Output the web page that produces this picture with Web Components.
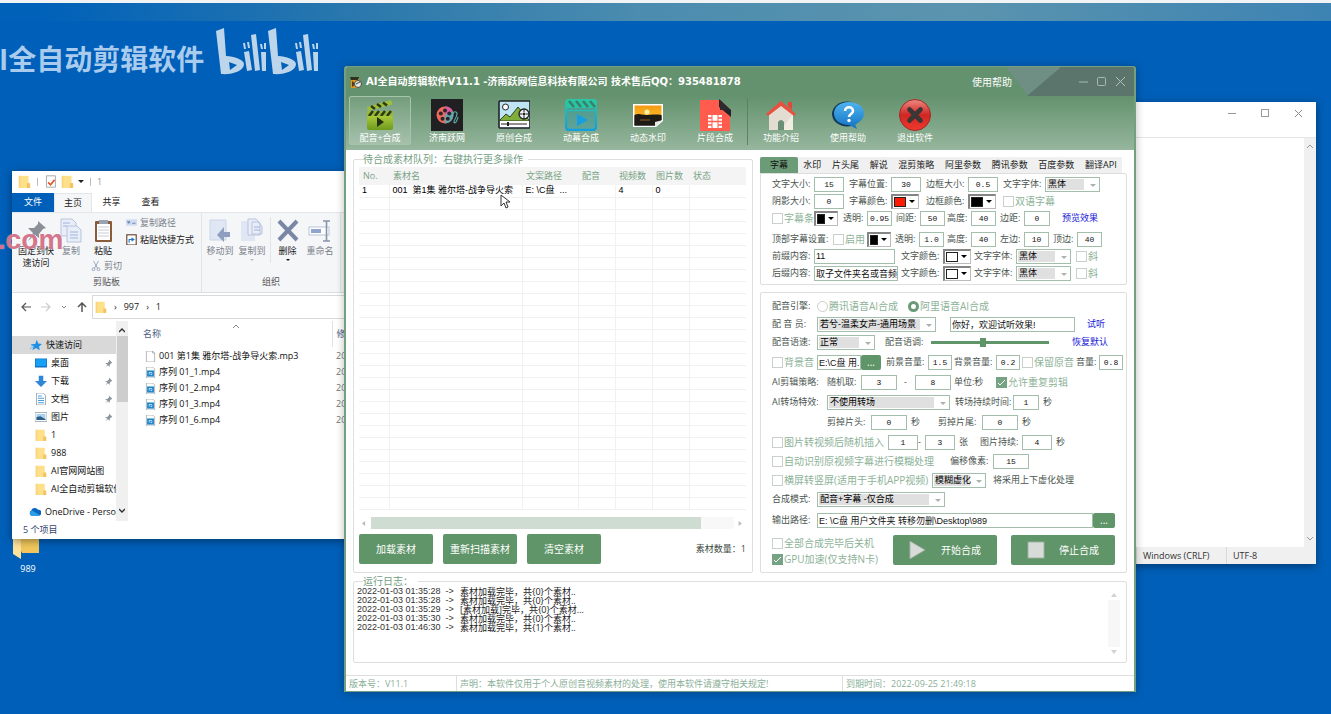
<!DOCTYPE html>
<html lang="zh-CN">
<head>
<meta charset="utf-8">
<title>AI全自动剪辑软件</title>
<style>
html,body{margin:0;height:100%;overflow:hidden;background:#005fb8}
body{font:9px/12px "Open Sans","Noto Sans CJK SC",sans-serif;color:#222}
</style>
</head>
<body>
<desktop-screen></desktop-screen>
<script>
const BASE = `*{box-sizing:border-box}:host([hidden]){display:none}
button,input,select{font:inherit;color:inherit;margin:0;padding:0;border:0;background:none;border-radius:0;outline:0;min-width:0}
svg{display:block}`;
const define = (name, css, html) => customElements.define(name, class extends HTMLElement {
  connectedCallback() {
    if (this.shadowRoot) return;
    const root = this.attachShadow({ mode: 'open' });
    const get = (key, fallback = '') => this.getAttribute(key) ?? fallback;
    root.innerHTML = `<style>${BASE}${css}</style>${typeof html === 'function' ? html(get) : html}`;
  }
});
const svg = (size, body, box = 32) => `<svg width="${size}" height="${size}" viewBox="0 0 ${box} ${box}" aria-hidden="true">${body}</svg>`;

/* ---------- icons ---------- */
const ICONS = {
  clapper: `<defs><linearGradient id="g" x2="0" y2="1"><stop stop-color="#a8c93a"/><stop offset="1" stop-color="#6f9a1c"/></linearGradient></defs>
    <path d="M3 8 27 1l1.500 4.500L4 12z" fill="#9dbf3a"/><path d="M7 7l4 3M13 5l4 3M19 3.500l4 3" stroke="#2d3a12" stroke-width="2.600"/>
    <path d="M3 12h26v6H3z" fill="#94b83a"/><path d="M9 12l-4 5M15 12l-4 5M21 12l-4 5M27 12l-4 5" stroke="#2d3a12" stroke-width="2.600"/>
    <rect x="3" y="17" width="26" height="14" rx="2" fill="url(#g)"/><path d="M13 18v10l7-5z" fill="#26300f"/>`,
  reel: `<rect width="32" height="32" fill="#201f22"/><circle cx="14" cy="16" r="8.500" fill="#ee6a5d"/><path d="M14 7.500a8.500 8.500 0 0 1 0 17z" fill="#5fa9b2"/><path d="M14 7.500a8.500 8.500 0 0 1 8 5l-8 3z" fill="#d95c9b"/>
    <g fill="#2a2629"><circle cx="14" cy="11.500" r="2"/><circle cx="9.800" cy="14.500" r="2"/><circle cx="11.500" cy="19.700" r="2"/><circle cx="16.800" cy="19.700" r="2"/><circle cx="18.300" cy="14.500" r="2"/></g>
    <path d="M22 15c0-3 4-3 4 0 0 4-4 6-3 9M23 24c3 0 3-3 4-6" fill="none" stroke="#57a99c" stroke-width="1.200"/>`,
  landscape: `<rect x="1" y="2" width="31" height="27" rx="1" fill="#bfe4f4" stroke="#20242a" stroke-width="1.600"/><path d="M2 21 8 15l4 3 8-10 11 13v1H2z" fill="#7fae3c" stroke="#31451e"/><path d="M2 22h29v6H2z" fill="#fff"/><path d="M3 25h26" stroke="#222" stroke-width="1.200"/><path d="M10 23v4" stroke="#222" stroke-width="2"/>
    <circle cx="7.500" cy="8" r="3" fill="#fff" stroke="#222"/><circle cx="26" cy="15" r="5" fill="#eef3f6" stroke="#222" stroke-width="1.300"/><circle cx="26" cy="15" r="1.500" fill="#222"/><path d="M26 10v3M26 17v3M21 15h3M28 15h3" stroke="#222"/>`,
  teal: `<defs><linearGradient id="t" x2="0" y2="1"><stop stop-color="#2bc7a4"/><stop offset="1" stop-color="#109fe0"/></linearGradient></defs>
    <rect x="1" y="1" width="30" height="30" rx="3" fill="#1d9fb4" fill-opacity=".35" stroke="url(#t)" stroke-width="2.400"/><path d="M1 2h30v7H1z" fill="#27c5a4"/><path d="M4 2l5 6M11 2l5 6M18 2l5 6M25 2l5 6" stroke="#3a7f68" stroke-width="2.500"/><path d="M1 11.500h30" stroke="#25bbb6" stroke-width="1.500"/><path d="M12 15v12l11-6z" fill="#169fe0"/>`,
  sunset: `<defs><linearGradient id="s" x2="0" y2="1"><stop stop-color="#f39a12"/><stop offset=".45" stop-color="#f9b224"/><stop offset=".55" stop-color="#5a3a12"/><stop offset="1" stop-color="#111"/></linearGradient></defs>
    <path d="M1 5h30v17l-7 6H1z" fill="#fff"/><path d="M2.500 6.500h27V21l-6 5.500h-21z" fill="url(#s)"/><circle cx="15" cy="13" r="2.500" fill="#fff2a8"/><path d="M2.500 16c5-2 7 0 11 0s10-1 16 0v5l-6 5.500h-21z" fill="#1e1a15"/><path d="M8 21h10" stroke="#8a6224"/><path d="M31 21l-8 7v-5z" fill="#e8e8e8"/>`,
  film: `<path d="M1 1h20l10 9v22H1z" fill="#ff5c4d"/><path d="M20 0 32 11v7L20 8z" fill="#23232a"/><path d="M21 1v10h10z" fill="#2d2a30"/><rect x="9" y="16" width="14" height="13" fill="#fff"/><path d="M13 16v13M19 16v13" stroke="#ff5c4d"/><path d="M13 22.500h6M9 19h4M9 22.500h4M9 26h4M19 19h4M19 22.500h4M19 26h4" stroke="#ff5c4d" stroke-width="1.300"/>`,
  home: `<path d="M4 15 16 5l12 10v16H4z" fill="#e2ddd0"/><path d="M16 31 28 15v16z" fill="#f0ecdf"/><path d="M23 3h4v8l-4-4z" fill="#e2473a"/><path d="M1 15 16 2l15 13-2 2L16 7 3 17z" fill="#e8503f"/><path d="M13 31v-8q3-4 6 0v8z" fill="#6b8f76"/>`,
  help: `<defs><linearGradient id="h" x2="0" y2="1"><stop stop-color="#4fb4ef"/><stop offset="1" stop-color="#1272c4"/></linearGradient></defs><ellipse cx="15" cy="15" rx="15" ry="12.500" fill="#123a58"/><path d="M17 3c9 0 15 5 15 11.500 0 5-4 9-9 10.500l2 5-8-4C8 26 2 21 2 14.500S8 3 17 3z" fill="url(#h)"/><path d="M13 12c0-5 8-5 8 0 0 3-4 3-4 6" fill="none" stroke="#fff" stroke-width="2.600"/><circle cx="17" cy="21.500" r="1.700" fill="#fff"/>`,
  exit: `<defs><linearGradient id="e" x2="0" y2="1"><stop stop-color="#ef8a84"/><stop offset=".5" stop-color="#d02722"/><stop offset="1" stop-color="#ef3a30"/></linearGradient></defs><circle cx="16" cy="16" r="15.500" fill="url(#e)" stroke="#a02a26"/><path d="M10.500 10.500l11 11M21.500 10.500l-11 11" stroke="#3c3535" stroke-width="4.600" stroke-linecap="round"/>`
};
const FOLDER = `<path d="M1 1h12v15H1z" fill="#ffe08a"/><path d="M1 1h2v15H1z" fill="#fbd37a"/><path d="M11 10h4v6h-4z" fill="#f3c45e"/>`;
const SMALL = {
  folder: FOLDER,
  star: `<path d="M9 1l2 5 5 .500-4 3.500 1 5-5-3-5 3 2-5-4-3 6-.500z" fill="#1c8fe6"/><path d="M0 13l5-3M1 9h4" stroke="#5db2f0"/>`,
  desktop: `<rect y="2" width="16" height="12" fill="#0f74c9"/><rect x="1" y="3" width="14" height="9" fill="#17a0f5"/>`,
  download: `<path d="M5 1h6v7h5l-8 8-8-8h5z" fill="#2f86d6"/>`,
  doc: `<path d="M2 0h9l3 3v13H2z" fill="#fff" stroke="#8595a5"/><path d="M4 4h5M4 7h8M4 10h8M4 13h8" stroke="#4d9bd9" stroke-width="1.400"/>`,
  picture: `<rect y="2" width="16" height="12" fill="#fff" stroke="#8a9aa8"/><rect x="2" y="4" width="12" height="8" fill="#a9d0ec"/><path d="M2 12V8l5-1 7 4v1z" fill="#2c5d86"/>`,
  cloud: `<path d="M3 13a4 4 0 0 1 0-7 5 5 0 0 1 9-1 4 4 0 0 1 1 8z" fill="#0a67c1"/><path d="M3 13a4 4 0 0 1 1-7l10 6-1 1z" fill="#28a0ea"/>`,
  blank: `<path d="M2 0h9l3 3v13H2z" fill="#fff" stroke="#999"/><path d="M11 0v3h3" fill="none" stroke="#999"/>`,
  video: `<path d="M2 0h9l3 3v13H2z" fill="#fff" stroke="#999"/><rect x="3" y="5" width="10" height="9" fill="#1d86cf"/><path d="M6 11V8h4M8 11h2V9" fill="none" stroke="#fff"/>`,
  pin: `<path d="M9 1l6 6-3 1-2 3 0 3-3-3-5 4 4-5-4-3 4 0 3-3z" fill="#8d949c"/>`
};

/* ---------- form controls ---------- */
const FIELD = `:host{display:flex;min-width:0;white-space:nowrap}label{display:flex;align-items:center;flex:1;min-width:0}
label>span{flex:none}`;
define('text-field', FIELD + `
input{flex:none;height:15px;border:1px solid #a3bfab;background:#fff;color:#111;text-align:center;font:8px/13px "Liberation Mono","Noto Sans CJK SC",monospace}
:host([wide]) input{text-align:left;padding-left:1px;font:9px/13px "Liberation Sans","Noto Sans CJK SC",sans-serif}
:host([fill]) input{flex:1;width:auto}i{font-style:normal;padding-left:4px}`,
  g => `<label><span style="width:${g('lw', 0)}px">${g('label')}</span><input style="width:${g('w', 30)}px" value="${g('value')}" aria-label="${g('label') || g('name')}">${g('unit') && `<i>${g('unit')}</i>`}</label>`);
define('select-field', FIELD + `
select{appearance:none;height:15px;border:1px solid #a3bfab;padding-left:2px;color:#000;font:9px/13px "Liberation Sans","Noto Sans CJK SC",sans-serif;
background:linear-gradient(#e0e0e0,#e0e0e0) 1px 1px/calc(100% - 16px) calc(100% - 2px) no-repeat,#fff}
label{position:relative}label:after{content:"";position:absolute;right:4px;top:7px;border:3px solid transparent;border-top:3px solid #aab4ad;border-bottom:0}label{flex:none}`,
  g => `<label><span style="width:${g('lw', 0)}px">${g('label')}</span><select style="width:${g('w', 55)}px" aria-label="${g('label') || g('name')}"><option>${g('value')}</option></select></label>`);
define('color-field', FIELD + `
button{display:flex;align-items:center;justify-content:space-between;height:15px;padding:1px;border:1px solid #bbb;border-width:2px 1px 1px 2px;border-top-color:#858585;border-left-color:#858585;background:#fff}
b{flex:1;height:10px;border:1px solid #222}u{margin:0 2px 0 3px;border:3px solid transparent;border-top:3px solid #000;border-bottom:0}`,
  g => `<label><span style="width:${g('lw', 0)}px">${g('label')}</span><button type="button" aria-label="${g('label') || '颜色'}" style="width:${g('w', 28)}px"><b style="background:${g('color')}"></b><u></u></button></label>`);
define('check-field', FIELD + `:host{color:#8db298;font-size:10px}
input{appearance:none;flex:none;width:11px;height:11px;margin-right:1px;border:1px solid #c9cfcb;background:#fff}
input:checked{border-color:#76a384;background:#76a384 linear-gradient(#76a384,#76a384)}
label{position:relative}svg{position:absolute;left:1px;display:none}input:checked+svg{display:block}
input[type=radio]{border-radius:50%}input[type=radio]:checked{background:#fff;border:3px solid #6b9a79}input[type=radio]:checked+svg{display:none}`,
  g => `<label><input type="${g('type', 'checkbox')}" ${g('on') && 'checked'}>${svg(9, '<path d="M1 5l2 2 5-5" fill="none" stroke="#fff"/>', 9)}${g('label')}</label>`);
define('slider-field', FIELD + `input{appearance:none;width:118px;height:12px;background:linear-gradient(#5f9568,#5f9568) center/100% 3px no-repeat}
input::-webkit-slider-thumb{appearance:none;width:6px;height:9px;background:#5f9568}`,
  g => `<label><span style="width:${g('lw')}px">${g('label')}</span><input type="range" min="0" max="100" value="44"></label>`);
define('text-link', `:host{display:block;white-space:nowrap}a{color:#1414d8;text-decoration:none}`, `<a href="#"><slot></slot></a>`);
define('push-button', `:host{display:block}button{display:flex;align-items:center;justify-content:center;width:100%;height:100%;border-radius:2px;background:#5f9568;color:#fff;font-size:10px;cursor:pointer;white-space:nowrap}
:host([small]) button{align-items:center;line-height:8px}
::slotted(svg){margin-right:14px}`, `<button type="button"><slot></slot></button>`);
define('form-row', `:host{display:block}div{display:grid;justify-content:start;align-items:center;height:16px;white-space:nowrap}`,
  g => `<div style="padding-left:${g('indent', 0)}px;${g('fill') ? 'display:flex' : `grid-template-columns:${g('cols').split(' ').map(c => c === 'auto' || !c ? 'auto' : c + 'px').join(' ')}`}"><slot></slot></div>`);
define('form-stack', `:host{display:flex;flex-direction:column}`, g => `<style>:host{gap:${g('gap', 0)}px}</style><slot></slot>`);
define('group-box', `:host{display:block;min-width:0}fieldset{display:flex;flex-direction:column;height:100%;min-width:0;margin:0;padding:2px 6px 7px 5px;border:1px solid #dcdfdd;border-radius:2px}
legend{margin-left:4px;padding:0 5px 0 0;font-size:10px;line-height:12px;color:#76a083}`,
  g => `<fieldset><legend>${g('label')}</legend><slot></slot></fieldset>`);

/* ---------- main window parts ---------- */
define('app-title', `:host{display:flex;position:relative;height:29px;align-items:center;padding-left:4px;color:#fff}
h1{flex:1;margin:0 0 0 4px;font:bold 10px/14px "DejaVu Sans","Noto Sans CJK SC",sans-serif;white-space:nowrap}
.help{font-size:10px;margin-right:15px}.ctl{display:flex;width:107px;height:29px;justify-content:flex-end;align-items:center;gap:8px;padding-right:8px;background:#5b756d;clip-path:polygon(0 100%,34px 0,100% 0,100% 100%)}
.fold{position:absolute;top:0;right:72px;width:56px;height:29px;background:#6f8f84;clip-path:polygon(0 0,100% 0,22px 100%)}
.help,.ctl{position:relative}`,
  `${svg(12, '<path d="M1 3h8v9H1z" fill="#e8961b"/><path d="M0 1h9l-1 3H1z" fill="#33301f"/><path d="M2 5l4 3-4 3z" fill="#5a3a10"/><circle cx="8" cy="8" r="3.500" fill="#e6e6e0" stroke="#454a45"/><path d="M6 8l4-2" stroke="#444"/>', 12)}
  <h1>AI全自动剪辑软件V11.1 -济南跃网信息科技有限公司 技术售后QQ：935481878</h1><div class="fold"></div><button class="help">使用帮助</button>
  <div class="ctl"><button aria-label="最小化">${svg(10, '<path d="M0 5h9" stroke="#a9b8b1"/>', 10)}</button><button aria-label="最大化">${svg(10, '<rect x=".5" y=".5" width="8" height="8" rx="1" fill="none" stroke="#a9b8b1"/>', 10)}</button><button aria-label="关闭">${svg(11, '<path d="M1 1l9 9M10 1l-9 9" stroke="#b5c2bc"/>', 11)}</button></div>`);
define('tool-button', `:host{display:block;width:62px;height:49px}button{display:flex;flex-direction:column;align-items:center;gap:1px;width:100%;height:100%;padding-top:2px;color:#fff;border:1px solid transparent;border-radius:2px;line-height:12px;cursor:pointer}
:host([active]) button{border-color:#a5c4ab;background:linear-gradient(#ffffff18,#ffffff30)}`,
  g => `<button type="button">${svg(32, ICONS[g('icon')])}<slot></slot></button>`);
define('tool-bar', `:host{display:flex;gap:5px;height:54px;padding-left:3px}hr{width:1px;height:47px;margin:2px -3px 0 -4px;border:0;background:#5a8264}`,
  [['clapper', '配音+合成', 'active'], ['reel', '济南跃网'], ['landscape', '原创合成'], ['teal', '动幕合成'], ['sunset', '动态水印'], ['film', '片段合成'], 0, ['home', '功能介绍'], ['help', '使用帮助'], ['exit', '退出软件']]
    .map(t => t ? `<tool-button icon="${t[0]}" ${t[2] || ''}>${t[1]}</tool-button>` : '<hr>').join(''));
define('material-table', `:host{display:block;height:349px;overflow:hidden}table{width:100%;table-layout:fixed;border-collapse:collapse}
th{height:18px;padding:0 0 0 4px;background:#f4f4f4;color:#7aa386;font-weight:400;text-align:left}
td{height:12px;padding:0 0 0 3px;border-right:1px solid #f0f2f0;border-bottom:1px solid #f0f2f0;color:#000;line-height:11px;white-space:nowrap}
td:last-child{border-right:0}td{font:9px/11px "Liberation Sans","Noto Sans CJK SC",sans-serif}`,
  `<table><colgroup><col style="width:30px"><col style="width:133px"><col style="width:56px"><col style="width:37px"><col style="width:37px"><col style="width:37px"><col></colgroup>
  <thead><tr><th>No.</th><th>素材名</th><th>文案路径</th><th>配音</th><th>视频数</th><th>图片数</th><th>状态</th></tr></thead>
  <tbody><tr><td>1</td><td>001 &nbsp;第1集 雅尔塔-战争导火索</td><td>E: \\C盘 &nbsp;...</td><td></td><td>4</td><td>0</td><td></td></tr>${'<tr><td></td><td></td><td></td><td></td><td></td><td></td><td></td></tr>'.repeat(26)}</tbody></table>`);
define('scroll-strip', `:host{display:flex;height:12px;margin:1px 3px 5px;align-items:center;gap:4px}div{flex:1;height:12px;background:#f7f8f7}div i{display:block;width:91%;height:12px;background:#cfdcd2}`,
  `${svg(5, '<path d="M5 0v8L0 4z" fill="#b4bcb6"/>', 8)}<div><i></i></div>${svg(5, '<path d="M1 0v8l5-4z" fill="#b4bcb6"/>', 8)}`);
define('material-panel', `:host{display:block}push-button{width:74px;height:30px}.bar{display:flex;gap:10px;align-items:center;color:#3c4a41}.bar span{margin-left:auto}group-box{height:100%}`,
  `<group-box label="待合成素材队列：右键执行更多操作"><material-table></material-table><scroll-strip></scroll-strip>
  <div class="bar"><push-button>加载素材</push-button><push-button>重新扫描素材</push-button><push-button>清空素材</push-button><span>素材数量：1</span></div></group-box>`);
define('tab-strip', `:host{display:flex;height:16px;margin-right:5px;background:#eff0ef}button{flex:1 1 auto;padding:0 3px;color:#222;white-space:nowrap}button:first-of-type{flex:0 0 38px;border-radius:2px 2px 0 0;background:#6c9b78;color:#111}`,
  ['字幕', '水印', '片头尾', '解说', '混剪策略', '阿里参数', '腾讯参数', '百度参数', '翻译API'].map((t, i) => `<button role="tab" aria-selected="${!i}">${t}</button>`).join(''));
const font = (w = 55) => `<select-field label="文字字体:" lw="42" w="${w}" value="黑体"></select-field>`;
define('subtitle-panel', `:host{display:block}section{padding:2px 0 3px 11px;border:1px solid #dcdfdd;border-radius:0 2px 2px}form-stack+form-stack{margin-top:5px}`,
  `<tab-strip></tab-strip><section>
  <form-stack gap="1">
    <form-row cols="77 77 77 auto"><text-field label="文字大小:" lw="42" value="15"></text-field><text-field label="字幕位置:" lw="42" value="30"></text-field><text-field label="边框大小:" lw="42" value="0.5"></text-field>${font()}</form-row>
    <form-row cols="77 77 77 auto"><text-field label="阴影大小:" lw="42" value="0"></text-field><color-field label="字幕颜色:" lw="42" color="#ff1a00"></color-field><color-field label="边框颜色:" lw="42" color="#000"></color-field><check-field label="双语字幕"></check-field></form-row>
    <form-row cols="42 29 53 51 53 62 auto"><check-field label="字幕条"></check-field><color-field w="24" color="#000"></color-field><text-field label="透明:" lw="24" w="25" value="0.95"></text-field><text-field label="间距:" lw="24" w="25" value="50"></text-field><text-field label="高度:" lw="24" w="25" value="40"></text-field><text-field label="边距:" lw="24" w="26" value="0"></text-field><text-link>预览效果</text-link></form-row>
  </form-stack>
  <form-stack gap="1">
    <form-row cols="61 34 28 52 53 53 auto"><span>顶部字幕设置:</span><check-field label="启用"></check-field><color-field w="24" color="#000"></color-field><text-field label="透明:" lw="24" w="25" value="1.0"></text-field><text-field label="高度:" lw="24" w="25" value="40"></text-field><text-field label="左边:" lw="24" w="25" value="10"></text-field><text-field label="顶边:" lw="24" w="25" value="40"></text-field></form-row>
    <form-row cols="129 73 102 auto"><text-field wide label="前缀内容:" lw="42" w="81" value="11"></text-field><color-field label="文字颜色:" lw="42" color="#fff"></color-field>${font()}<check-field label="斜"></check-field></form-row>
    <form-row cols="129 73 102 auto"><text-field wide label="后缀内容:" lw="42" w="84" value="取子文件夹名或音频"></text-field><color-field label="文字颜色:" lw="42" color="#fff"></color-field>${font()}<check-field label="斜"></check-field></form-row>
  </form-stack></section>`);
define('voice-panel', `:host{display:block}section{height:100%;padding:5px 3px 5px 11px;border:1px solid #dcdfdd;border-radius:2px}
form-stack+form-stack{margin-top:4px}.path{margin:5px 8px 7px 0}.end{display:flex;gap:14px;margin-right:8px}.end form-stack{flex:1}.end push-button{width:104px;height:30px}
.dots{width:20px;height:15px}.path .dots{width:22px}.out{flex:1}`,
  `<section><form-stack gap="2">
    <form-row cols="45 91 auto"><span>配音引擎:</span><check-field type="radio" label="腾讯语音AI合成"></check-field><check-field type="radio" on="1" label="阿里语音AI合成"></check-field></form-row>
    <form-row cols="178 137 auto"><select-field label="配 音 员:" lw="45" w="119" value="若兮-温柔女声-通用场景"></select-field><text-field wide name="试听文本" w="125" value="你好，欢迎试听效果!"></text-field><text-link>试听</text-link></form-row>
    <form-row cols="113 187 auto"><select-field label="配音语速:" lw="45" w="58" value="正常"></select-field><slider-field label="配音语调:" lw="46"></slider-field><text-link>恢复默认</text-link></form-row>
  </form-stack><form-stack gap="4">
    <form-row cols="45 44 25 68 68 54 auto"><check-field label="背景音"></check-field><text-field wide name="背景音路径" w="44" value="E:\\C盘 用."></text-field><push-button class="dots" small>...</push-button><text-field label="前景音量:" lw="42" w="24" value="1.5"></text-field><text-field label="背景音量:" lw="42" w="24" value="0.2"></text-field><check-field label="保留原音"></check-field><text-field label="音量:" lw="23" w="24" value="0.8"></text-field></form-row>
    <form-row cols="55 77 50 42 auto"><span>AI剪辑策略:</span><text-field label="随机取:" lw="34" w="36" value="3"></text-field><text-field label="-" lw="11" w="36" value="8"></text-field><span>单位:秒</span><check-field on="1" label="允许重复剪辑"></check-field></form-row>
    <form-row cols="183 auto"><select-field label="AI转场特效:" lw="55" w="123" value="不使用转场"></select-field><text-field label="转场持续时间:" lw="58" w="26" value="1" unit="秒"></text-field></form-row>
    <form-row indent="55" cols="111 auto"><text-field label="剪掉片头:" lw="44" w="36" value="0" unit="秒"></text-field><text-field label="剪掉片尾:" lw="44" w="36" value="0" unit="秒"></text-field></form-row>
  </form-stack><form-stack gap="3">
    <form-row cols="116 30 62 auto"><check-field label="图片转视频后随机插入"></check-field><text-field name="最少张数" w="30" value="1"></text-field><text-field label="-" lw="7" w="30" value="3" unit="张"></text-field><text-field label="图片持续:" lw="42" w="30" value="4" unit="秒"></text-field></form-row>
    <form-row cols="178 auto"><check-field label="自动识别原视频字幕进行模糊处理"></check-field><text-field label="偏移像素:" lw="43" w="36" value="15"></text-field></form-row>
    <form-row cols="160 61 auto"><check-field label="横屏转竖屏(适用于手机APP视频)"></check-field><select-field name="模糊方式" w="54" value="模糊虚化"></select-field><span>将采用上下虚化处理</span></form-row>
    <form-row cols="auto"><select-field label="合成模式:" lw="45" w="128" value="配音+字幕 -仅合成"></select-field></form-row>
  </form-stack>
  <form-row class="path" fill="1"><text-field class="out" wide fill label="输出路径:" lw="45" value="E: \\C盘 用户文件夹 转移勿删\\Desktop\\989"></text-field><push-button class="dots" small>...</push-button></form-row>
  <div class="end"><form-stack><form-row cols="auto"><check-field label="全部合成完毕后关机"></check-field></form-row><form-row cols="auto"><check-field on="1" label="GPU加速(仅支持N卡)"></check-field></form-row></form-stack>
  <push-button>${svg(18, '<path d="M1 0l17 10L1 20z" fill="#d8dcd8" stroke="#96a898"/>', 20)}开始合成</push-button><push-button>${svg(18, '<rect x="1" y="1" width="18" height="18" fill="#d8dcd8" stroke="#8ca38f"/>', 20)}停止合成</push-button></div></section>`);
const LOG = [['28', '35', '素材加载完毕，共{0}个素材..'], ['28', '35', '素材加载完毕，共{0}个素材..'], ['29', '35', '[素材加载]完毕，共{0}个素材...'], ['30', '35', '素材加载完毕，共{0}个素材..'], ['30', '46', '素材加载完毕，共{1}个素材..']];
define('run-log', `:host{display:flex;height:68px;margin:-2px 0 0 -2px}ol{flex:1;margin:0;padding:0;list-style:none;color:#1c1c1c}
li{display:grid;grid-template-columns:103px 1fr;height:9px;line-height:9px;white-space:nowrap}time{font:9px/9px "Liberation Sans",sans-serif;color:#333;word-spacing:0}
aside{display:flex;flex-direction:column;align-items:center;justify-content:space-between;width:12px;padding:5px 0 0}aside i{width:12px;height:47px;background:#f7f7f7}`,
  `<ol role="log">${LOG.map(l => `<li><time>2022-01-03 01:${l[1]}:${l[0]} &nbsp;-&gt;</time><span>${l[2]}</span></li>`).join('')}</ol><aside>${svg(6, '<path d="M0 5l3-4 3 4z" fill="#d0d3d0"/>', 6)}<i></i>${svg(6, '<path d="M0 1l3 4 3-4z" fill="#d0d3d0"/>', 6)}</aside>`);
define('app-window', `:host{display:flex;flex-direction:column;border:solid #75a080;border-width:1px 2px;border-radius:3px 3px 0 0;background:#fff;color:#4b554f;overflow:hidden;box-shadow:0 1px 8px #0004}
header{background:linear-gradient(#64926e 0,#64926e 35%,#96b69d)}
main{display:grid;grid-template-columns:1fr 367px;gap:0 7px;padding:3px 7px 12px}.right{display:flex;flex-direction:column;gap:7px;padding-top:4px}voice-panel{flex:1}
.log{grid-column:1/3;margin-top:2px;height:88px}
footer{display:flex;height:16px;border-top:1px solid #dcdfdd;color:#8cb098;line-height:15px;white-space:nowrap}footer span{padding-left:3px;border-right:1px solid #dcdfdd}
footer span:nth-child(1){width:111px}footer span:nth-child(2){width:386px}footer span:last-child{border:0}`,
  `<header><app-title></app-title><tool-bar></tool-bar></header><main><material-panel></material-panel><div class="right"><subtitle-panel></subtitle-panel><voice-panel></voice-panel></div>
  <group-box class="log" label="运行日志："><run-log></run-log></group-box></main>
  <footer><span>版本号：V11.1</span><span>声明：本软件仅用于个人原创音视频素材的处理，使用本软件请遵守相关规定!</span><span>到期时间：2022-09-25 21:49:18</span></footer>`);

/* ---------- file explorer ---------- */
const big = body => svg(28, body, 28);
define('ribbon-button', `:host{display:block}button{display:flex;flex-direction:column;align-items:center;width:100%;line-height:12px;color:#7b828b}:host([on]) button{color:#222}`, `<button type="button"><slot></slot></button>`);
define('explorer-ribbon', `:host{display:flex;height:82px;border-top:1px solid #e3e5e8;border-bottom:1px solid #dcdee0;background:#f5f6f8}
.g{display:flex;flex-direction:column;border-right:1px solid #e2e4e6;padding-top:4px}.g>footer{margin-top:auto;height:16px;line-height:12px;text-align:center;color:#555}
.r{display:flex}.clip{width:190px}.org{width:139px}.pin{width:48px}.copy{width:22px}.paste{width:42px;color:#222}.side{display:flex;flex-direction:column;gap:5px;padding-left:2px}
.side button,.paste .cut{display:flex;align-items:center;gap:3px;color:#7b828b;white-space:nowrap}.side .on{color:#222}.cut{margin:3px 0 0 9px}
.m{width:32px}.m:first-child{margin-left:2px}.d{width:34px;border-left:1px solid #e2e4e6;margin-left:2px}small{border:2px solid transparent;border-top:2px solid #bbb;margin-top:2px}.d small{border-top-color:#111}`,
  `<div class="g clip"><div class="r">
  <ribbon-button class="pin" on>${big('<path d="M16 4l8 7-3 1-4 5v4l-4-3-7 6 5-8-5-5h6l4-4z" fill="#8a9095"/>')}固定到快<span>速访问</span></ribbon-button>
  <ribbon-button class="copy">${big('<path d="M4 2h11l4 4v13H4z" fill="#e8edf7" stroke="#b9c4dc"/><path d="M10 9h10l4 4v12H10z" fill="#e8edf7" stroke="#b9c4dc"/><path d="M13 15h8M13 18h8M13 21h8M6 6h7M6 9h4" stroke="#9fb2dc"/>')}复制</ribbon-button>
  <div class="paste"><ribbon-button on>${big('<rect x="6" y="4" width="17" height="21" rx="1" fill="#8a5c3c"/><rect x="8" y="7" width="13" height="16" fill="#fff"/><path d="M10 3h9v4h-9z" fill="#9aa4b0"/><path d="M9 10h11M9 13h11M9 16h11M9 19h11" stroke="#c6ccd6"/>')}粘贴</ribbon-button><button class="cut">${svg(10, '<path d="M3 0l5 9M9 0L4 9" stroke="#8d9ab5"/><circle cx="3" cy="10" r="1.700" fill="none" stroke="#8d9ab5"/><circle cx="9" cy="10" r="1.700" fill="none" stroke="#8d9ab5"/>', 12)}剪切</button></div>
  <div class="side"><button>${svg(11, '<rect y="3" width="14" height="8" fill="#cfdcf3"/><path d="M2 5l1 3 1-3 1 3M8 8h4" fill="none" stroke="#5c7099"/>', 14)}复制路径</button><button class="on">${svg(11, '<rect x="1" y="1" width="12" height="13" fill="#fff" stroke="#6b4a36" stroke-width="1.500"/><path d="M4 11V7h5M7 5l3 2-3 2" fill="none" stroke="#1b75c9" stroke-width="1.400"/>', 14)}粘贴快捷方式</button></div></div><footer>剪贴板</footer></div>
  <div class="g org"><div class="r">
  <ribbon-button class="m">${big('<path d="M4 3h16v20H4z" fill="#dfe6f4" stroke="#ccd6e8"/><path d="M24 15h-6v-5l-7 8 7 7v-5h6z" fill="#8f9fbf"/>')}移动到<small></small></ribbon-button>
  <ribbon-button class="m">${big('<path d="M3 4h14v20H3z" fill="#dfe6f4"/><path d="M10 2h8l4 4v12H10zM14 5h6l4 4v8H14z" fill="#e8edf7" stroke="#b9c4dc"/><path d="M16 10h6M16 13h6" stroke="#9fb2dc"/>')}复制到<small></small></ribbon-button>
  <ribbon-button class="d" on>${big('<path d="M5 4l18 19M23 4L5 23" stroke="#7987a6" stroke-width="4"/>')}删除<small></small></ribbon-button>
  <ribbon-button class="m">${big('<rect x="3" y="10" width="20" height="8" fill="#fff" stroke="#b9c4d8"/><rect x="5" y="12" width="10" height="4" fill="#8fa5d0"/><path d="M17 4h7M17 24h7M20.500 4v20" stroke="#8893ab" stroke-width="1.600"/>')}重命名</ribbon-button></div><footer>组织</footer></div>`);
const item = (icon, text, pinned, cls = '') => `<li class="${cls}">${svg(12, SMALL[icon], 16)}<span>${text}</span>${pinned ? svg(9, SMALL.pin, 16) : ''}</li>`;
define('explorer-tree', `:host{display:flex;width:116px}ul{flex:1;width:104px;margin:0;padding:15px 0 0;list-style:none;overflow:hidden}li{display:flex;align-items:center;height:18px;padding:0 3px 0 23px;gap:4px;white-space:nowrap;color:#111}
li.top{padding-left:18px;background:#d9d9d9;margin-top:0}li.cloud{padding-left:17px;margin-top:5px}li span{flex:1;min-width:0}li svg{flex:none}
aside{display:flex;flex-direction:column;justify-content:space-between;align-items:center;width:12px;padding:3px 0 4px;background:#f0f0f0}aside i{width:11px;height:66px;margin:0 0 auto;background:#cdcdcd}aside svg{margin:3px 0}`,
  `<ul>${item('star', '快速访问', 0, 'top')}${item('desktop', '桌面', 1)}${item('download', '下载', 1)}${item('doc', '文档', 1)}${item('picture', '图片', 1)}${item('folder', '1')}${item('folder', '988')}${item('folder', 'AI官网网站图')}${item('folder', 'AI全自动剪辑软件')}${item('cloud', 'OneDrive - Personal', 0, 'cloud')}</ul>
  <aside>${svg(6, '<path d="M0 5l3-3 3 3" fill="none" stroke="#333" stroke-width="1.400"/>', 6)}<i></i>${svg(6, '<path d="M0 1l3 3 3-3" fill="none" stroke="#333" stroke-width="1.400"/>', 6)}</aside>`);
define('explorer-files', `:host{display:block;flex:1;position:relative}table{width:100%;border-collapse:collapse;table-layout:fixed}th{height:26px;padding:0 0 0 15px;text-align:left;font-weight:400;color:#4d6083}th+th{padding-left:4px;border-left:1px solid #e2e2e2}
td{height:16px;padding:0 0 0 17px;white-space:nowrap;color:#111}td+td{padding-left:4px;color:#777}td div{display:flex;align-items:center;gap:3px}tbody:before{content:"";display:block;height:1px}.sort{position:absolute;left:105px;top:2px}`,
  `<table><colgroup><col style="width:204px"><col></colgroup><thead><tr><th>名称</th><th>修</th></tr></thead><tbody>${['001 第1集 雅尔塔-战争导火索.mp3', '序列 01_1.mp4', '序列 01_2.mp4', '序列 01_3.mp4', '序列 01_6.mp4'].map((n, i) => `<tr><td><div>${svg(11, SMALL[i ? 'video' : 'blank'], 16)}${n}</div></td><td>20</td></tr>`).join('')}</tbody></table>
  <span class="sort">${svg(6, '<path d="M0 5l3-3 3 3" fill="none" stroke="#888"/>', 6)}</span>`);
define('explorer-window', `:host{display:flex;flex-direction:column;background:#fff;color:#222;box-shadow:0 2px 8px #0006}
.cap{display:flex;align-items:center;gap:4px;height:22px;padding-left:6px;color:#999}.cap i{width:1px;height:8px;margin:0 2px;background:#bbb}.cap u{border:3px solid transparent;border-top:3px solid #222;border-bottom:0}
nav{display:flex;height:19px}nav button{width:39px;color:#222;font-size:9px}nav .f{width:42px;background:#005fb8;color:#fff}nav .on{width:38px;border:1px solid #e3e5e8;border-bottom:0;background:#f5f6f8}
.addr{display:flex;height:28px;align-items:center;gap:10px;padding-left:9px}.addr div{display:flex;flex:1;align-items:center;gap:7px;height:24px;margin-left:-5px;padding-left:2px;border:1px solid #d9d9d9;font-size:9px}
.body{display:flex;flex:1}footer{height:18px;line-height:18px;padding-left:11px;color:#34466b}`,
  `<div class="cap">${svg(13, FOLDER, 16)}<i></i>${svg(13, '<path d="M3 1h11v14H3z" fill="#fff" stroke="#999"/><path d="M5 9l3 3 5-6" fill="none" stroke="#e2562c" stroke-width="2"/>', 16)}${svg(13, FOLDER, 16)}<u></u><i></i><span>1</span></div>
  <nav><button class="f">文件</button><button class="on">主页</button><button>共享</button><button>查看</button></nav><explorer-ribbon></explorer-ribbon>
  <div class="addr">${svg(10, '<path d="M10 5H1M5 1L1 5l4 4" fill="none" stroke="#555" stroke-width="1.200"/>', 10)}${svg(10, '<path d="M0 5h9M5 1l4 4-4 4" fill="none" stroke="#ccc" stroke-width="1.200"/>', 10)}${svg(6, '<path d="M1 2l2 2 2-2" fill="none" stroke="#888"/>', 6)}${svg(10, '<path d="M5 10V1M1 5l4-4 4 4" fill="none" stroke="#555" stroke-width="1.500"/>', 10)}<div>${svg(12, FOLDER, 16)}<span>›</span><span>997</span><span>›</span><span>1</span></div></div>
  <div class="body"><explorer-tree></explorer-tree><explorer-files></explorer-files></div><footer>5 个项目</footer>`);

/* ---------- notepad ---------- */
define('notepad-window', `:host{display:flex;flex-direction:column;background:#fff;box-shadow:0 2px 8px #0006}
header{display:flex;justify-content:flex-end;gap:24px;height:36px;padding:6px 13px;border-bottom:1px solid #e6e6e6}header button{height:10px}
.page{display:flex;flex:1}textarea{flex:1;border:0;padding:0;resize:none;outline:0}aside{display:flex;flex-direction:column;align-items:center;justify-content:space-between;width:12px;padding:5px 0;background:#f0f0f0}
footer{display:flex;justify-content:flex-end;height:17px;background:#f0f0f0;line-height:17px;color:#333}footer span{width:90px;padding-left:6px;border-left:1px solid #d9d9d9;white-space:nowrap}`,
  `<header><button aria-label="最小化">${svg(9, '<path d="M0 4.500h8" stroke="#999"/>', 9)}</button><button aria-label="最大化">${svg(9, '<rect x=".5" y=".5" width="7" height="7" fill="none" stroke="#999"/>', 9)}</button><button aria-label="关闭">${svg(9, '<path d="M1 1l7 7M8 1L1 8" stroke="#888"/>', 9)}</button></header>
  <div class="page"><textarea aria-label="文本内容"></textarea><aside>${svg(6, '<path d="M0 5l3-3 3 3" fill="none" stroke="#999"/>', 6)}${svg(6, '<path d="M0 1l3 3 3-3" fill="none" stroke="#999"/>', 6)}</aside></div><footer><span>Windows (CRLF)</span><span>UTF-8</span></footer>`);

/* ---------- desktop ---------- */
define('desktop-screen', `:host{display:block;position:relative;height:100vh;min-height:700px;overflow:hidden;background:#005fb8}
.edge{height:3px;background:#f1f3f5}.band{height:18px;background:linear-gradient(90deg,#0061b9 3%,#2a78ad 27%,#4b8caf 48%,#5b94ae 72%,#3d83b3)}
notepad-window,explorer-window,app-window,.mark,.site,.file,.cursor{position:absolute}
notepad-window{left:52%;right:15px;top:102px;height:462px}explorer-window{left:12px;width:420px;top:171px;height:368px}app-window{left:344px;right:195px;top:66px}
.mark{display:flex;left:-1px;top:28px;gap:12px;color:#a9cbed;font:700 28px/60px "Noto Sans CJK SC",sans-serif;white-space:nowrap}
.site{left:-2px;top:224px;font:bold 28px/32px "Liberation Sans",sans-serif;color:#c8506ccc;text-shadow:0 0 1px #fff}
.file{left:12px;top:531px;width:32px;color:#fff;text-align:center}.file svg{margin-bottom:4px}.cursor{left:500px;top:194px}`,
  `<div class="edge"></div><div class="band"></div>
  <div class="file"><svg width="28" height="28" viewBox="0 0 28 28"><path d="M1 3h16v2h10v17H10z" fill="#f1c75d"/><path d="M1 2l8 3v23l-8-5z" fill="#ffe29a"/></svg>989</div>
  <notepad-window></notepad-window><explorer-window></explorer-window><app-window></app-window>
  <div class="mark"><span>I全自动剪辑软件</span><svg width="104" height="48" viewBox="0 0 104 48"><defs><g id="b"><path fill-rule="evenodd" d="M0 3 8 0l2 28c8 0 18 4 18 8 0 7-12 11-23 10zM13 34l1 8 7-5z"/><path d="M27 15h2l1 6h-2zM31 14h2l1 6h-2zM28 24l5-1 3 19-5 1zM35 7l5-1 4 36-5 1zM44 16h2l1 5h-2zM48 15h2v6h-2zM45 24h5v19h-4z"/></g></defs><g fill="#bdd5ea"><use href="#b"/><use href="#b" x="52"/></g></svg></div>
  <div class="site">.com</div>
  <div class="cursor"><svg width="11" height="15" viewBox="0 0 11 15"><path d="M1 1v11l3-3 2 5 2-1-2-5h4z" fill="#fff" stroke="#333"/></svg></div>`);
</script>
</body>
</html>
